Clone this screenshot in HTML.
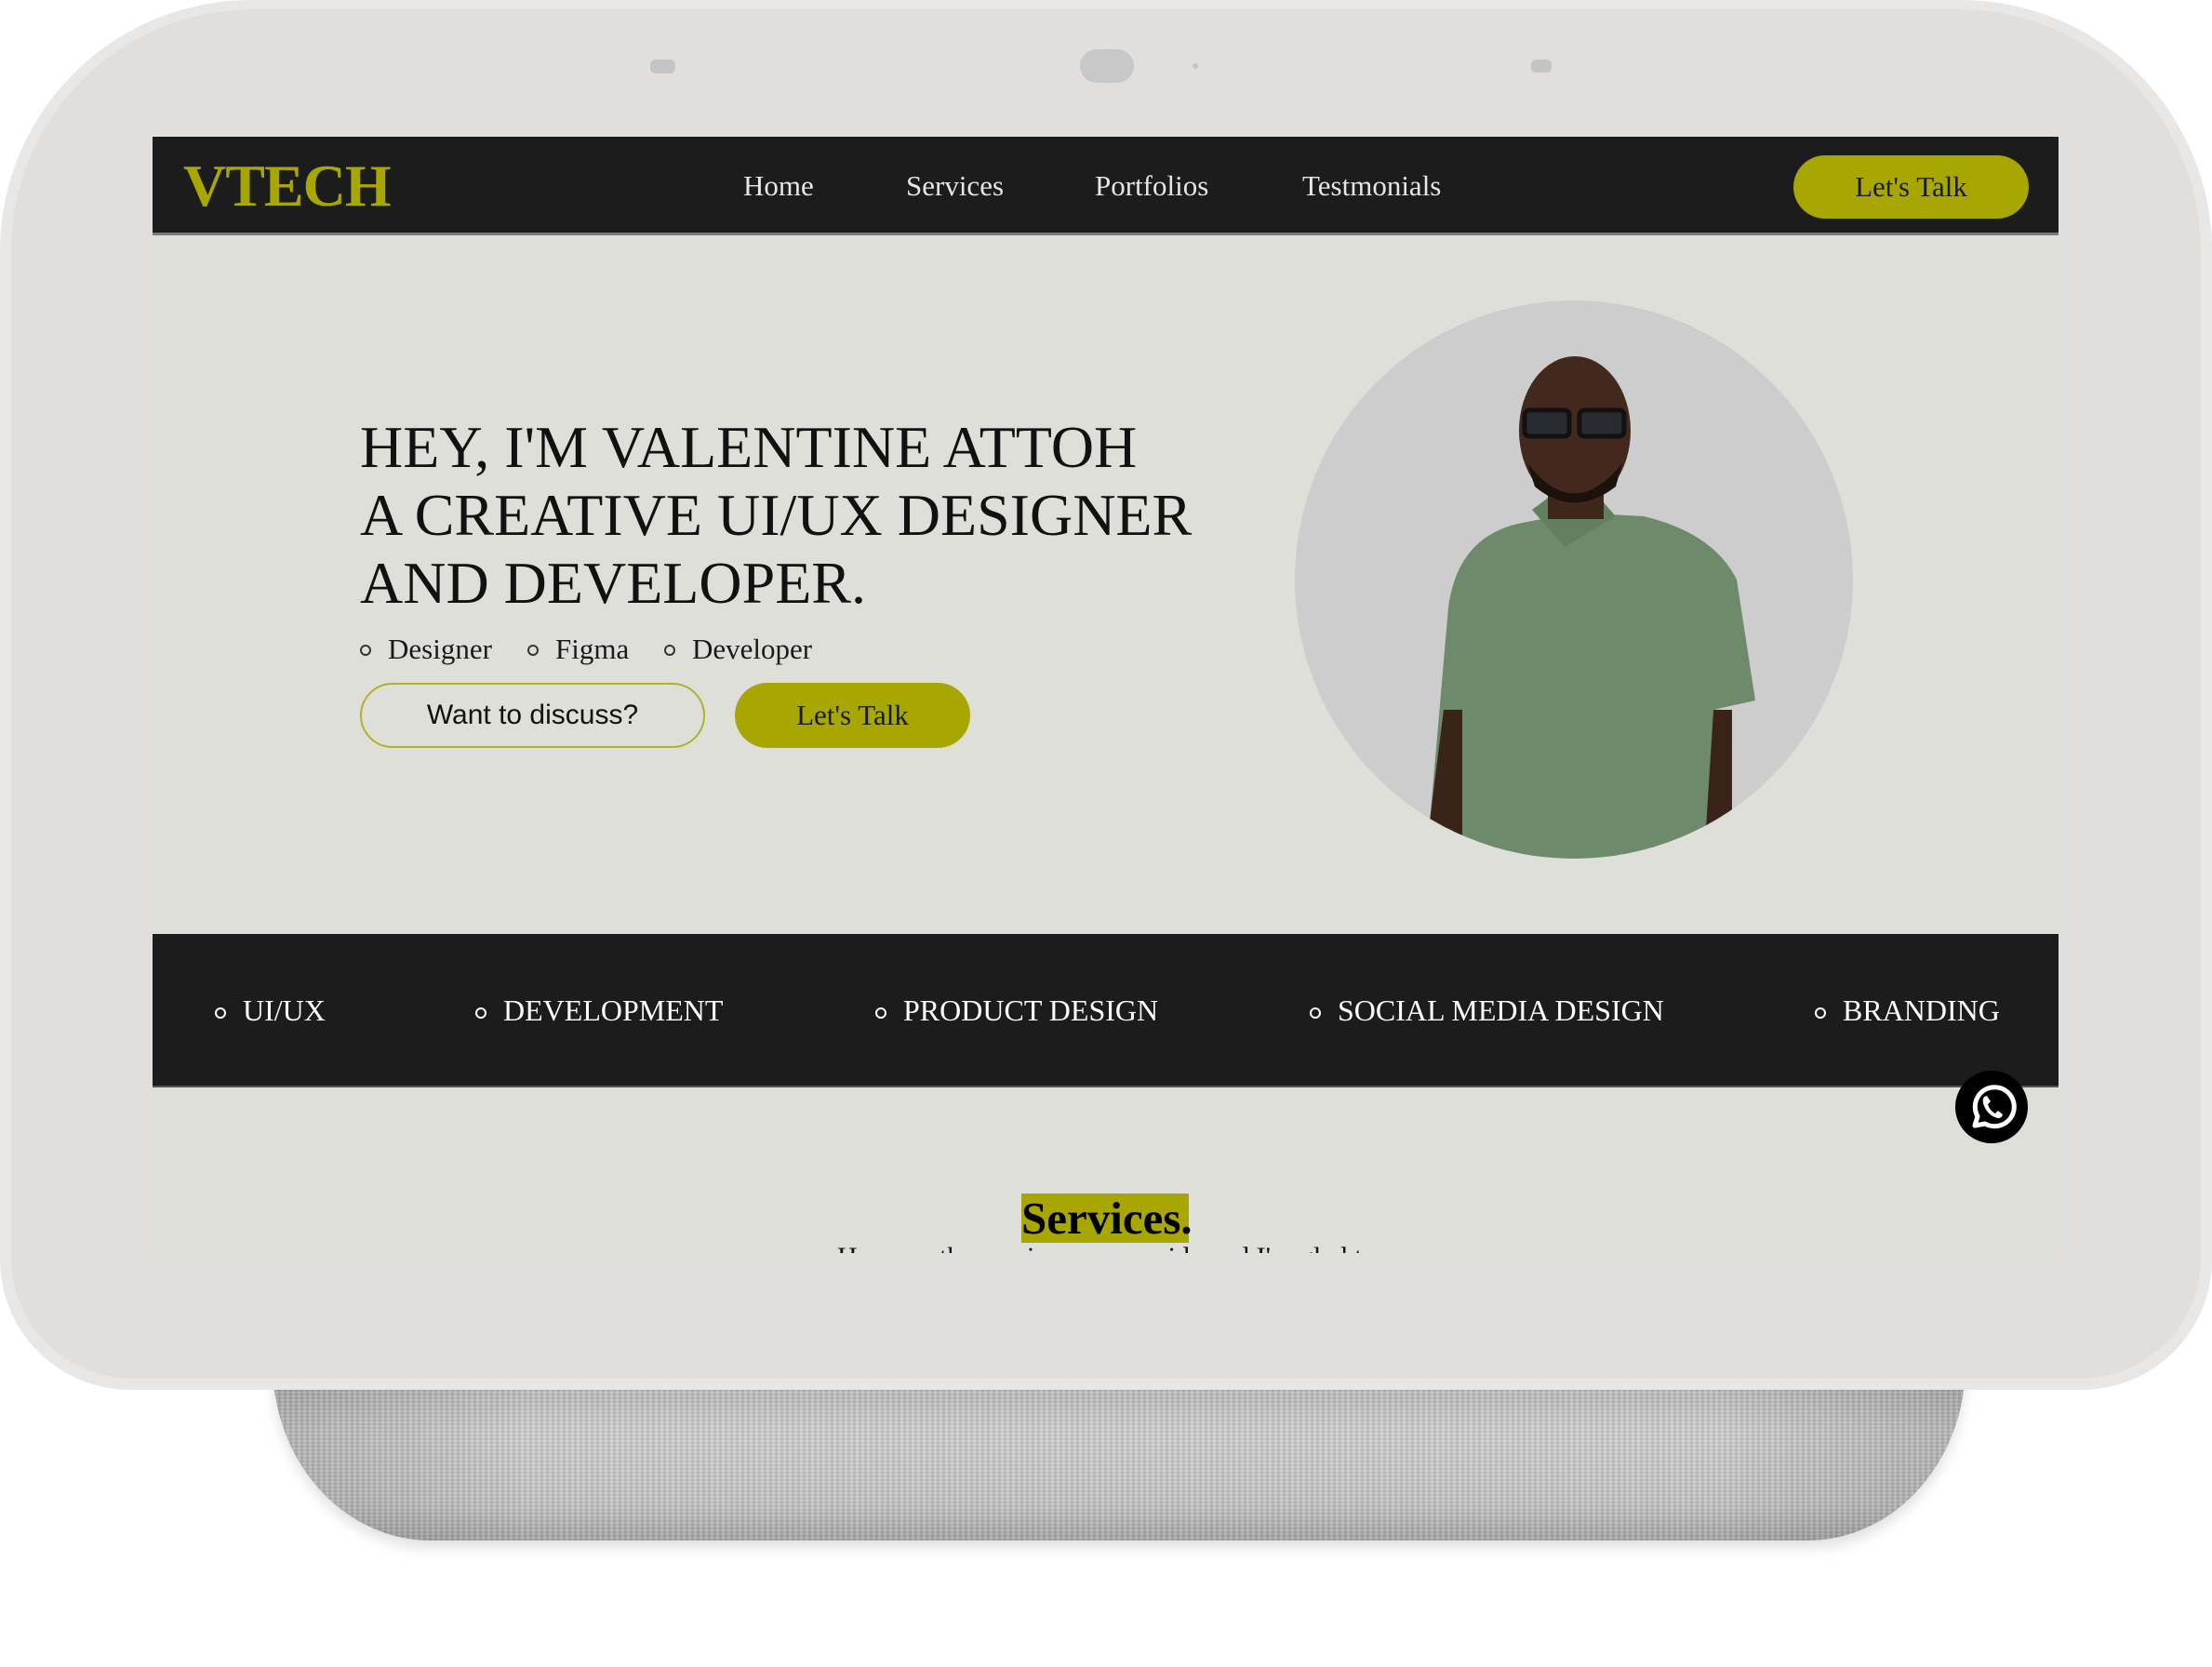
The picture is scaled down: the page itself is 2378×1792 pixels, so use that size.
<!DOCTYPE html>
<html><head><meta charset="utf-8"><style>
*{margin:0;padding:0;box-sizing:border-box}
body{width:2378px;height:1792px;background:#fff;position:relative;overflow:hidden;font-family:"Liberation Serif",serif}
.abs{position:absolute}
.stand{left:293px;top:1460px;width:1820px;height:196px;border-radius:0 0 170px 170px/0 0 190px 190px;
background:repeating-linear-gradient(90deg,rgba(0,0,0,.06) 0 3px,rgba(255,255,255,.08) 3px 6px),repeating-linear-gradient(0deg,rgba(0,0,0,.05) 0 2px,rgba(255,255,255,.06) 2px 4px),linear-gradient(90deg,rgba(0,0,0,.12),rgba(0,0,0,0) 15%,rgba(0,0,0,0) 85%,rgba(0,0,0,.12)),linear-gradient(180deg,#b0b0b0,#d0d0d0 40%,#c6c6c6 80%,#a8a8a8);box-shadow:0 8px 14px rgba(0,0,0,.12)}
.body{left:0;top:0;width:2378px;height:1494px;background:#e8e7e6;border-radius:270px 270px 140px 140px}
.inner{left:12px;top:10px;width:2354px;height:1472px;background:#e0dfdd;border-radius:260px 260px 130px 130px}
.screen{left:164px;top:147px;width:2049px;height:1200px;background:#dfdfd9;overflow:hidden}
.nav{left:0;top:0;width:2049px;height:106px;background:#1c1c1c;border-bottom:3px solid #7a7a7a}
.logo{left:33px;top:16px;font-size:64px;font-weight:bold;color:#a8a600;letter-spacing:-1px}
.nl{top:35px;font-size:31px;color:#e6e6e6}
.btn{border-radius:40px;background:#a8a600;color:#1a1a1a;font-size:31px;display:flex;align-items:center;justify-content:center}
h1{position:absolute;left:223px;top:297px;font-weight:normal;font-size:64px;line-height:73px;color:#111;white-space:nowrap}
.li{top:533px;font-size:31px;color:#1a1a1a}
.dot{display:inline-block;width:12px;height:12px;border:2px solid #333;border-radius:50%;position:absolute}
.band{left:0;top:857px;width:2049px;height:165px;background:#1c1c1c;border-bottom:2px solid #555}
.bi{top:64px;font-size:32px;color:#fff;white-space:nowrap}
.bd{display:inline-block;width:12px;height:12px;border:2px solid #fff;border-radius:50%;position:absolute;top:15px}
</style></head><body>
<div class="abs stand"></div>
<div class="abs body"></div>
<div class="abs inner"></div>
<div class="abs" style="left:699px;top:64px;width:27px;height:15px;border-radius:6px;background:#c4c4c4"></div>
<div class="abs" style="left:1161px;top:53px;width:58px;height:36px;border-radius:18px;background:#c8c8c8"></div>
<div class="abs" style="left:1282px;top:68px;width:6px;height:6px;border-radius:3px;background:#c4c4c4"></div>
<div class="abs" style="left:1646px;top:64px;width:22px;height:14px;border-radius:5px;background:#c4c4c4"></div>
<div class="abs screen">
 <div class="abs nav">
  <div class="abs logo">VTECH</div>
  <div class="abs nl" style="left:635px">Home</div>
  <div class="abs nl" style="left:810px">Services</div>
  <div class="abs nl" style="left:1013px">Portfolios</div>
  <div class="abs nl" style="left:1236px">Testmonials</div>
  <div class="abs btn" style="left:1764px;top:20px;width:253px;height:68px">Let's Talk</div>
 </div>
 <h1>HEY, I'M VALENTINE ATTOH<br>A CREATIVE UI/UX DESIGNER<br>AND DEVELOPER.</h1>
 <div class="abs li" style="left:223px"><span class="dot" style="left:0;top:13px"></span><span style="margin-left:30px">Designer</span></div>
 <div class="abs li" style="left:403px"><span class="dot" style="left:0;top:13px"></span><span style="margin-left:30px">Figma</span></div>
 <div class="abs li" style="left:550px"><span class="dot" style="left:0;top:13px"></span><span style="margin-left:30px">Developer</span></div>
 <div class="abs" style="left:223px;top:587px;width:371px;height:70px;border:2px solid #b3b02a;border-radius:36px;font-family:'Liberation Sans',sans-serif;font-size:30px;color:#111;display:flex;align-items:center;justify-content:center">Want to discuss?</div>
 <div class="abs btn" style="left:626px;top:587px;width:253px;height:70px">Let's Talk</div>
 <svg class="abs" style="left:1228px;top:176px" width="600" height="600" viewBox="0 0 600 600">
  <defs><clipPath id="c"><circle cx="300" cy="300" r="300"/></clipPath></defs>
  <circle cx="300" cy="300" r="300" fill="#cdcdcd"/>
  <g clip-path="url(#c)">
   <path d="M140 620 L165 330 Q175 255 240 240 L300 228 L375 232 Q450 250 475 300 L495 430 L450 440 L440 620Z" fill="#6d8a6b"/>
   <path d="M140 600 L160 440 L180 440 L180 600Z" fill="#3a241a"/>
   <path d="M440 600 L450 440 L470 440 L470 600Z" fill="#3a241a"/>
   <path d="M255 225 L290 265 L345 232 L330 215 L275 210Z" fill="#62805f"/>
   <rect x="272" y="195" width="60" height="40" fill="#3d261b"/>
   <ellipse cx="301" cy="140" rx="60" ry="80" fill="#43291d"/>
   <path d="M250 175 Q300 240 352 175 L345 200 Q300 235 258 200Z" fill="#1b120d"/>
   <rect x="247" y="118" width="48" height="28" rx="5" fill="#2a2a33" stroke="#111" stroke-width="5"/>
   <rect x="306" y="118" width="48" height="28" rx="5" fill="#2a2a33" stroke="#111" stroke-width="5"/>
  </g>
 </svg>
 <div class="abs band">
  <div class="abs bi" style="left:97px"><span class="bd" style="left:-30px"></span>UI/UX</div>
  <div class="abs bi" style="left:377px"><span class="bd" style="left:-30px"></span>DEVELOPMENT</div>
  <div class="abs bi" style="left:807px"><span class="bd" style="left:-30px"></span>PRODUCT DESIGN</div>
  <div class="abs bi" style="left:1274px"><span class="bd" style="left:-30px"></span>SOCIAL MEDIA DESIGN</div>
  <div class="abs bi" style="left:1817px"><span class="bd" style="left:-30px"></span>BRANDING</div>
 </div>
 <svg class="abs" style="left:1937px;top:1003px" width="80" height="80" viewBox="0 0 80 80">
  <circle cx="40" cy="40" r="39" fill="#000"/>
  <path d="M22 60 L25 50 A21 21 0 1 1 33 58 Z" fill="none" stroke="#fff" stroke-width="5" stroke-linejoin="round"/>
  <path d="M32 29 Q29 33 33 41 Q38 50 47 52 Q51 52 52 48 L47 44 L44 47 Q38 44 36 37 L39 34 L35 28Z" fill="#fff"/>
 </svg>
 <div class="abs" style="left:934px;top:1136px;width:180px;height:53px;background:#a8a600;font-size:49px;font-weight:bold;color:#000;line-height:53px;text-align:center">Services.</div>
 <div class="abs" style="left:736px;top:1188px;font-size:30px;color:#111;white-space:nowrap">Here are the services we provide and I'm glad to</div>
</div>
<div class="abs" style="left:164px;top:1347px;width:2049px;height:60px;background:#e0dfdd"></div>
</body></html>
